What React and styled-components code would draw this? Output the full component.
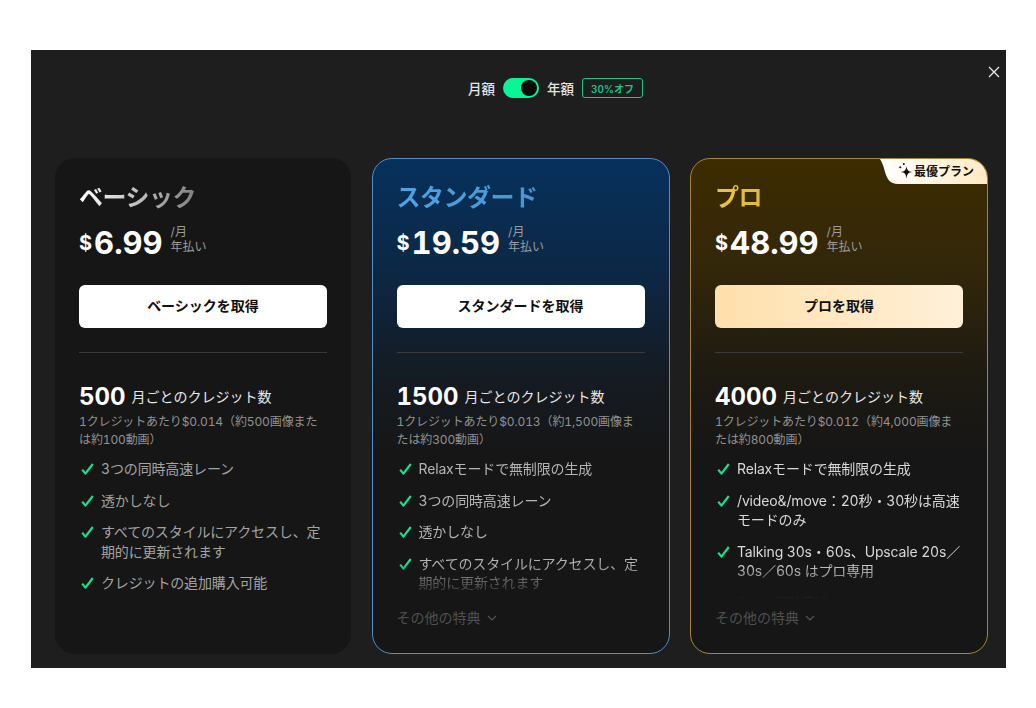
import React from "react";
import styled, { createGlobalStyle } from "styled-components";

const plans = [
  {
    kind: "basic",
    name: "ベーシック",
    price: "6.99",
    cta: "ベーシックを取得",
    credits: "500",
    note: "1クレジットあたり$0.014（約500画像または約100動画）",
    features: ["3つの同時高速レーン", "透かしなし", "すべてのスタイルにアクセスし、定期的に更新されます", "クレジットの追加購入可能"],
  },
  {
    kind: "standard",
    name: "スタンダード",
    price: "19.59",
    cta: "スタンダードを取得",
    credits: "1500",
    note: "1クレジットあたり$0.013（約1,500画像または約300動画）",
    features: ["Relaxモードで無制限の生成", "3つの同時高速レーン", "透かしなし", "すべてのスタイルにアクセスし、定期的に更新されます"],
    more: true,
  },
  {
    kind: "pro",
    name: "プロ",
    price: "48.99",
    cta: "プロを取得",
    credits: "4000",
    note: "1クレジットあたり$0.012（約4,000画像または約800動画）",
    features: ["Relaxモードで無制限の生成", "/video&/move：20秒・30秒は高速モードのみ", "Talking 30s・60s、Upscale 20s／30s／60s はプロ専用", "6つの同時高速レーン"],
    more: true,
  },
];

const looks = {
  basic: {
    card: "#161616",
    border: "transparent",
    inset: "23px",
    title: "linear-gradient(90deg, #ffffff 0%, #7f7f7f 100%)",
    feature: "#a3a3a3",
    button: "#ffffff",
  },
  standard: {
    card: "linear-gradient(180deg, #06315c 0%, #0c2846 22%, #151b22 44%, #161616 60%)",
    border: "#4f8fc9",
    inset: "24px",
    title: "linear-gradient(90deg, #4fa3e6 0%, #4a94d2 100%)",
    feature: "#b4b4b4",
    button: "#ffffff",
  },
  pro: {
    card: "linear-gradient(180deg, #3d2c00 0%, #33270a 22%, #1d1a12 44%, #161616 60%)",
    border: "#a8862c",
    inset: "24px",
    title: "linear-gradient(90deg, #e9c53f 0%, #e0bb3c 100%)",
    feature: "#d8d8d8",
    button: "linear-gradient(90deg, #ffe0ac 0%, #fff0d8 100%)",
  },
};

function Check() {
  return (
    <svg width="15" height="14" viewBox="0 0 15 14" fill="none">
      <path d="M3.2 7.6 L6.4 11.6 L13.8 2" stroke="#12e38c" strokeWidth="2.2" strokeLinejoin="round" />
    </svg>
  );
}

function Sparkle() {
  return (
    <svg width="16" height="18" viewBox="0 0 16 18" fill="#111">
      <path d="M9.5 4 C10 8.2 11 9.4 15.5 10 C11 10.6 10 11.8 9.5 17 C9 11.8 8 10.6 3.5 10 C8 9.4 9 8.2 9.5 4 Z" />
      <path d="M3.2 3.4 C3.4 4.6 3.8 5 5 5.2 C3.8 5.4 3.4 5.8 3.2 7 C3 5.8 2.6 5.4 1.4 5.2 C2.6 5 3 4.6 3.2 3.4 Z" />
      <circle cx="6.8" cy="2" r="1" />
    </svg>
  );
}

function PlanCard({ plan }) {
  return (
    <Card $kind={plan.kind}>
      {plan.kind === "pro" && (
        <Ribbon>
          <Sparkle />
          最優プラン
        </Ribbon>
      )}
      <PlanName $kind={plan.kind}>{plan.name}</PlanName>
      <PriceRow>
        <Dollar>$</Dollar>
        <Amount>{plan.price}</Amount>
        <Period>
          <span>/月</span>
          <span>年払い</span>
        </Period>
      </PriceRow>
      <Cta $kind={plan.kind}>{plan.cta}</Cta>
      <Divider />
      <Credits>
        <strong>{plan.credits}</strong> 月ごとのクレジット数
      </Credits>
      <CreditNote>{plan.note}</CreditNote>
      <Features $fade={plan.more}>
        {plan.features.map((text) => (
          <Feature key={text} $kind={plan.kind}>
            <Check />
            <span>{text}</span>
          </Feature>
        ))}
      </Features>
      {plan.more && (
        <More>
          その他の特典
          <svg width="10" height="6" viewBox="0 0 10 6" fill="none">
            <path d="M1 1 L5 5 L9 1" stroke="#555" strokeWidth="1.2" />
          </svg>
        </More>
      )}
    </Card>
  );
}

export default function App() {
  return (
    <>
      <Global />
      <Page>
        <Modal>
          <Close aria-label="close">
            <svg width="12" height="12" viewBox="0 0 12 12" fill="none">
              <path d="M1 1 L11 11 M11 1 L1 11" stroke="#e8e8e8" strokeWidth="1.3" />
            </svg>
          </Close>
          <BillingRow>
            <span>月額</span>
            <Toggle />
            <span>年額</span>
            <Discount>30%オフ</Discount>
          </BillingRow>
          <Cards>
            {plans.map((plan) => (
              <PlanCard key={plan.kind} plan={plan} />
            ))}
          </Cards>
        </Modal>
      </Page>
    </>
  );
}

const Global = createGlobalStyle`
  html, body {
    margin: 0;
    background: #ffffff;
    font-family: Inter, "Noto Sans CJK JP", sans-serif;
    font-feature-settings: "tnum" 1;
  }
`;

const Page = styled.div`
  width: 1036px;
  height: 708px;
  padding: 50px 30px 40px 31px;
  box-sizing: border-box;
  overflow: hidden;
`;

const Modal = styled.div`
  position: relative;
  height: 618px;
  background: #1e1e1e;
  padding: 28px 17.5px 14px 24px;
  box-sizing: border-box;
  display: flex;
  flex-direction: column;
`;

const Close = styled.button`
  position: absolute;
  top: 16px;
  right: 6px;
  width: 12px;
  height: 12px;
  padding: 0;
  border: 0;
  background: none;
  display: flex;
`;

const BillingRow = styled.div`
  height: 20px;
  padding-left: 67.5px;
  display: flex;
  align-items: center;
  justify-content: center;
  gap: 8px;
  color: #e4e4e4;
  font-size: 13.5px;
  font-weight: 500;
`;

const Toggle = styled.div`
  width: 36px;
  height: 20px;
  border-radius: 10px;
  background: #0af593;
  position: relative;
  &::after {
    content: "";
    position: absolute;
    top: 2px;
    right: 2px;
    width: 16px;
    height: 16px;
    border-radius: 50%;
    background: #0a0a0a;
  }
`;

const Discount = styled.div`
  height: 20px;
  width: 61px;
  box-sizing: border-box;
  border: 1px solid #12c985;
  border-radius: 3px;
  color: #1ac488;
  font-size: 10px;
  font-weight: 600;
  display: flex;
  align-items: center;
  justify-content: center;
`;

const Cards = styled.div`
  margin-top: 60px;
  flex: 1;
  display: grid;
  grid-template-columns: 296px 298px 298px;
  gap: 20.5px;
`;

const Card = styled.div`
  position: relative;
  overflow: hidden;
  height: 496px;
  box-sizing: border-box;
  padding: 24px ${(p) => looks[p.$kind].inset};
  border-radius: 20px;
  border: 1px solid ${(p) => looks[p.$kind].border};
  background: ${(p) => looks[p.$kind].card};
  display: flex;
  flex-direction: column;
`;

const Ribbon = styled.div`
  position: absolute;
  top: 0;
  right: 0;
  width: 107px;
  height: 25px;
  padding: 0 13px 2px 0;
  box-sizing: border-box;
  clip-path: path("M0 0 L107 0 L107 25 L18 25 C10 25 7 20 5 13 C3.5 7 2 3 0 0 Z");
  background: linear-gradient(90deg, #ffffff 0%, #ffeac4 100%);
  color: #111;
  font-size: 12px;
  font-weight: 600;
  display: flex;
  align-items: center;
  justify-content: flex-end;
  gap: 1px;
`;

const PlanName = styled.div`
  align-self: flex-start;
  height: 30px;
  line-height: 30px;
  font-size: 24px;
  font-weight: 700;
  letter-spacing: -0.5px;
  background: ${(p) => looks[p.$kind].title};
  -webkit-background-clip: text;
  background-clip: text;
  color: transparent;
`;

const PriceRow = styled.div`
  margin-top: 9px;
  height: 36px;
  display: flex;
  align-items: center;
  color: #ffffff;
  font-weight: 700;
`;

const Dollar = styled.span`
  font-size: 20px;
  margin-top: 6px;
  margin-right: 2px;
`;

const Amount = styled.span`
  font-size: 31px;
  line-height: 36px;
  margin-top: 5px;
`;

const Period = styled.div`
  margin-left: 8px;
  padding-bottom: 2px;
  display: flex;
  flex-direction: column;
  color: #9c9c9c;
  font-size: 12px;
  font-weight: 400;
  line-height: 15px;
`;

const Cta = styled.div`
  margin-top: 27px;
  height: 43px;
  padding-bottom: 3px;
  box-sizing: border-box;
  flex-shrink: 0;
  border-radius: 6px;
  background: ${(p) => looks[p.$kind].button};
  color: #111;
  font-size: 14px;
  font-weight: 600;
  display: flex;
  align-items: center;
  justify-content: center;
`;

const Divider = styled.div`
  margin-top: 24px;
  height: 1px;
  flex-shrink: 0;
  background: #3a3a3a;
`;

const Credits = styled.div`
  margin-top: 28px;
  height: 30px;
  display: flex;
  align-items: center;
  gap: 6px;
  color: #e8e8e8;
  font-size: 14px;
  font-weight: 400;
  strong {
    color: #ffffff;
    font-size: 24px;
    font-weight: 700;
  }
`;

const CreditNote = styled.div`
  margin-top: 2px;
  color: #929292;
  font-size: 12px;
  line-height: 18px;
  letter-spacing: -0.12px;
`;

const Features = styled.ul`
  list-style: none;
  margin: 10px 0 0;
  padding: 0;
  height: ${(p) => (p.$fade ? "140px" : "auto")};
  overflow: hidden;
  display: flex;
  flex-direction: column;
  gap: 12px;
  ${(p) => p.$fade && "mask-image: linear-gradient(180deg, #000 74%, transparent 100%);"}
`;

const Feature = styled.li`
  display: flex;
  gap: 7px;
  flex-shrink: 0;
  color: ${(p) => looks[p.$kind].feature};
  font-size: 14px;
  line-height: 19.5px;
  letter-spacing: -0.15px;
  svg {
    flex-shrink: 0;
    margin-top: 3px;
  }
`;

const More = styled.div`
  margin-top: 9px;
  display: flex;
  align-items: center;
  gap: 6px;
  color: #505050;
  font-size: 14px;
  line-height: 20px;
`;
